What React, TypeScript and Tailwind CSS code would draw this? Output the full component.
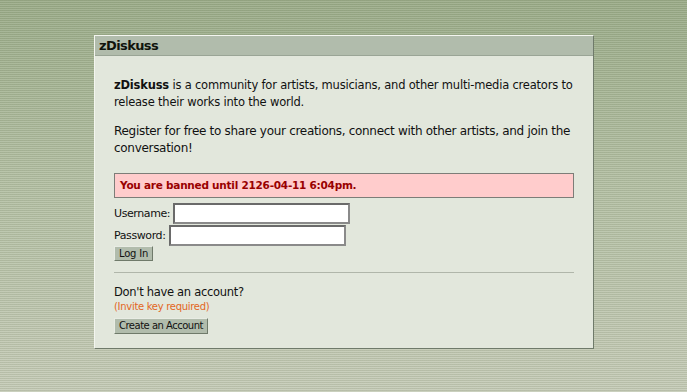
export default function App() {
  return (
    <div
      className="w-[687px] h-[392px] overflow-hidden bg-[repeating-linear-gradient(to_bottom,rgba(60,70,40,0.10)_0px,rgba(60,70,40,0.10)_1px,rgba(255,255,255,0.08)_1px,rgba(255,255,255,0.08)_2px),linear-gradient(to_bottom,#9cad8a_0%,#b4c0a4_45%,#c6ccb8_100%)] pt-[35px]"
      style={{ fontFamily: '"DejaVu Sans", Verdana, sans-serif' }}
    >
      <div className="ml-[94px] w-[500px] bg-[#e2e7dc] border border-t-[#f4f6f0] border-l-[#f4f6f0] border-r-[#6f7a6a] border-b-[#6f7a6a]">
        <div className="h-[20px] bg-[#b1bcac] border-b border-[#9aa596] pl-[4px] flex items-center text-[13px] tracking-[-0.6px] font-bold text-[#10140c]">
          zDiskuss
        </div>
        <div className="px-[19px] pt-[21px] pb-[14px] text-[12px] text-[#111] leading-[17px]">
          <p className="text-[11.5px] tracking-[-0.2px] whitespace-nowrap">
            <b>zDiskuss</b> is a community for artists, musicians, and other multi-media creators to
            <br />
            release their works into the world.
          </p>
          <p className="mt-[12px] tracking-[-0.3px] whitespace-nowrap">
            Register for free to share your creations, connect with other artists, and join the
            <br />
            conversation!
          </p>
          <div className="mt-[16px] h-[25px] bg-[#ffcccc] border border-[#7d7d78] flex items-center pl-[5px] text-[10.5px] tracking-[-0.25px] font-bold text-[#990000]">
            You are banned until 2126-04-11 6:04pm.
          </div>
          <div className="mt-[5px] text-[11px] tracking-[-0.4px] leading-[14px]">
            <div className="flex items-center">
              <span>Username:</span>
              <input className="ml-[3px] w-[177px] h-[21px] bg-white border-2 border-t-[#6a6a6a] border-l-[#6a6a6a] border-r-[#8a8a8a] border-b-[#8a8a8a] outline-none" />
            </div>
            <div className="flex items-center mt-[1px]">
              <span>Password:</span>
              <input type="password" className="ml-[3px] w-[177px] h-[21px] bg-white border-2 border-t-[#6a6a6a] border-l-[#6a6a6a] border-r-[#8a8a8a] border-b-[#8a8a8a] outline-none" />
            </div>
            <button className="h-[15px] px-[4px] bg-[#b1bcac] border border-t-[#e8ece4] border-l-[#e8ece4] border-r-[#6f7a6a] border-b-[#6f7a6a] text-[10px] tracking-[-0.2px] leading-[12px] text-[#111] flex items-center">
              Log In
            </button>
          </div>
          <div className="mt-[11px] h-px bg-[#b0b6aa]" />
          <div className="mt-[11px] text-[11.5px] tracking-[-0.3px] leading-[16px]">Don't have an account?</div>
          <div className="text-[10px] tracking-[-0.3px] leading-[13px] text-[#e2661e]">(Invite key required)</div>
          <button className="mt-[5px] h-[16px] px-[4px] bg-[#b1bcac] border border-t-[#e8ece4] border-l-[#e8ece4] border-r-[#6f7a6a] border-b-[#6f7a6a] text-[10px] tracking-[-0.5px] leading-[12px] text-[#111] flex items-center">
            Create an Account
          </button>
        </div>
      </div>
    </div>
  );
}
